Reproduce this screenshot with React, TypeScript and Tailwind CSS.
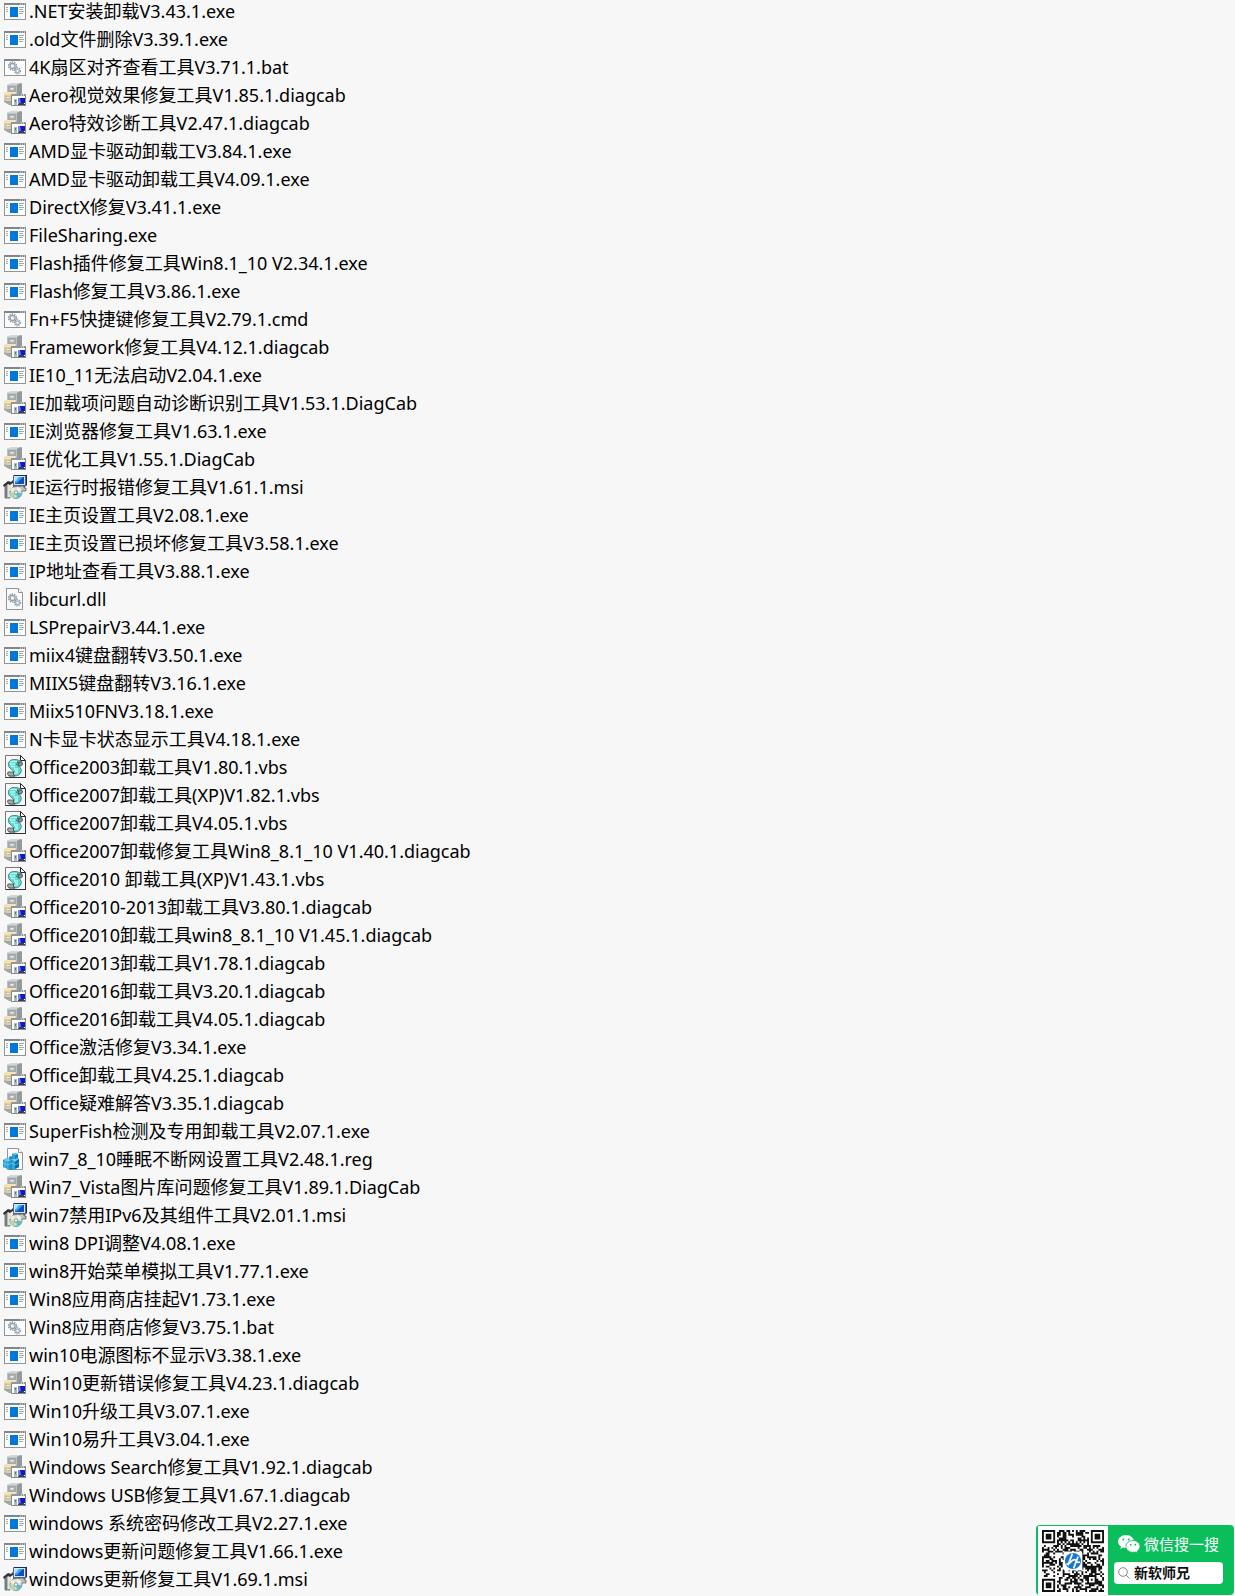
import type { ReactNode } from 'react';

type FileKind = 'exe' | 'bat' | 'cab' | 'msi' | 'dll' | 'vbs' | 'reg';

const FILES = [
  '.NET安装卸载V3.43.1.exe',
  '.old文件删除V3.39.1.exe',
  '4K扇区对齐查看工具V3.71.1.bat',
  'Aero视觉效果修复工具V1.85.1.diagcab',
  'Aero特效诊断工具V2.47.1.diagcab',
  'AMD显卡驱动卸载工V3.84.1.exe',
  'AMD显卡驱动卸载工具V4.09.1.exe',
  'DirectX修复V3.41.1.exe',
  'FileSharing.exe',
  'Flash插件修复工具Win8.1_10 V2.34.1.exe',
  'Flash修复工具V3.86.1.exe',
  'Fn+F5快捷键修复工具V2.79.1.cmd',
  'Framework修复工具V4.12.1.diagcab',
  'IE10_11无法启动V2.04.1.exe',
  'IE加载项问题自动诊断识别工具V1.53.1.DiagCab',
  'IE浏览器修复工具V1.63.1.exe',
  'IE优化工具V1.55.1.DiagCab',
  'IE运行时报错修复工具V1.61.1.msi',
  'IE主页设置工具V2.08.1.exe',
  'IE主页设置已损坏修复工具V3.58.1.exe',
  'IP地址查看工具V3.88.1.exe',
  'libcurl.dll',
  'LSPrepairV3.44.1.exe',
  'miix4键盘翻转V3.50.1.exe',
  'MIIX5键盘翻转V3.16.1.exe',
  'Miix510FNV3.18.1.exe',
  'N卡显卡状态显示工具V4.18.1.exe',
  'Office2003卸载工具V1.80.1.vbs',
  'Office2007卸载工具(XP)V1.82.1.vbs',
  'Office2007卸载工具V4.05.1.vbs',
  'Office2007卸载修复工具Win8_8.1_10 V1.40.1.diagcab',
  'Office2010 卸载工具(XP)V1.43.1.vbs',
  'Office2010-2013卸载工具V3.80.1.diagcab',
  'Office2010卸载工具win8_8.1_10 V1.45.1.diagcab',
  'Office2013卸载工具V1.78.1.diagcab',
  'Office2016卸载工具V3.20.1.diagcab',
  'Office2016卸载工具V4.05.1.diagcab',
  'Office激活修复V3.34.1.exe',
  'Office卸载工具V4.25.1.diagcab',
  'Office疑难解答V3.35.1.diagcab',
  'SuperFish检测及专用卸载工具V2.07.1.exe',
  'win7_8_10睡眠不断网设置工具V2.48.1.reg',
  'Win7_Vista图片库问题修复工具V1.89.1.DiagCab',
  'win7禁用IPv6及其组件工具V2.01.1.msi',
  'win8 DPI调整V4.08.1.exe',
  'win8开始菜单模拟工具V1.77.1.exe',
  'Win8应用商店挂起V1.73.1.exe',
  'Win8应用商店修复V3.75.1.bat',
  'win10电源图标不显示V3.38.1.exe',
  'Win10更新错误修复工具V4.23.1.diagcab',
  'Win10升级工具V3.07.1.exe',
  'Win10易升工具V3.04.1.exe',
  'Windows Search修复工具V1.92.1.diagcab',
  'Windows USB修复工具V1.67.1.diagcab',
  'windows 系统密码修改工具V2.27.1.exe',
  'windows更新问题修复工具V1.66.1.exe',
  'windows更新修复工具V1.69.1.msi',
];

const KIND_BY_EXTENSION: Record<string, FileKind> = {
  exe: 'exe',
  bat: 'bat',
  cmd: 'bat',
  diagcab: 'cab',
  msi: 'msi',
  dll: 'dll',
  vbs: 'vbs',
  reg: 'reg',
};

function kindOf(name: string): FileKind {
  const extension = name.slice(name.lastIndexOf('.') + 1).toLowerCase();
  return KIND_BY_EXTENSION[extension] ?? 'dll';
}

// Window frame shared by programs and batch files
function WindowFrame({ children }: { children: ReactNode }) {
  return (
    <>
      <rect x="1.5" y="3.5" width="21" height="16" fill="#fff" stroke="#8f9498" />
      <path d="M1 3h22v2H1z" fill="#80868b" />
      <path d="M17 3.5h1v1h-1zM19 3.5h1v1h-1zM21 3.5h1v1h-1z" fill="#e8eaec" />
      {children}
    </>
  );
}

function Gears() {
  return (
    <>
      <circle cx="9.5" cy="10" r="4" fill="none" stroke="#8d979f" strokeWidth="1.4" strokeDasharray="1.5 1" />
      <circle cx="9.5" cy="10" r="2.6" fill="#dce2e6" stroke="#929ca4" strokeWidth="1.2" />
      <circle cx="9.5" cy="10" r="1.1" fill="#fff" />
      <circle cx="14.5" cy="14.8" r="3" fill="none" stroke="#8d979f" strokeWidth="1.3" strokeDasharray="1.3 .9" />
      <circle cx="14.5" cy="14.8" r="1.9" fill="#dbe5eb" stroke="#8aa0ae" />
      <circle cx="14.5" cy="14.8" r=".8" fill="#fff" />
    </>
  );
}

const ICONS: Record<FileKind, ReactNode> = {
  exe: (
    <WindowFrame>
      <path d="M7 7h8v10H7z" fill="#0078d7" />
      <path d="M3 7.5h2M3 9.5h2M3 11.5h2M16 7.5h5M16 9.5h4M16 11.5h5M16 13.5h4" stroke="#a3a8ac" />
    </WindowFrame>
  ),
  bat: (
    <WindowFrame>
      <Gears />
    </WindowFrame>
  ),
  dll: (
    <>
      <path d="M3.500.5h12l4 4v17h-16z" fill="#fafafa" stroke="#8f9498" />
      <path d="M15.500.5v4h4" fill="#fff" stroke="#8f9498" />
      <Gears />
    </>
  ),
  cab: (
    <>
      <path d="M4 1l5-2h9l1 2v11l-5 4H4z" fill="#a9aeaf" />
      <path d="M4 1l5-2h9l-4 2z" fill="#d3d7d7" />
      <path d="M4 1h10v9H4z" fill="#bcc1c1" />
      <path d="M14 1l4-2 1 1v11h-5z" fill="#939a9b" />
      <path d="M5.500 2.500h7v5h-7z" fill="#aeb4b5" stroke="#959b9d" strokeWidth=".6" />
      <path d="M7.500 4h3v1.500h-3z" fill="#edf0ef" />
      <path d="M1 10l2-2h10v8l-3 3H5l-4-3z" fill="#e2c67e" />
      <path d="M3 8h10l-1 3H1z" fill="#f6e5b3" />
      <path d="M1 11h8v6H3l-2-2z" fill="#d8cda4" />
      <path d="M3 12.500h4v2H3z" fill="#f5f2e6" stroke="#a5a08b" strokeWidth=".5" />
      <path d="M1 16l2 1h6v4H6l-5-3z" fill="#a4a9a7" />
      <rect x="8.500" y="10.500" width="14" height="11" fill="#fff" stroke="#858b91" />
      <path d="M8 10h15v2H8z" fill="#9096a0" />
      <path d="M18 10.500h1v1h-1zM20 10.500h1v1h-1z" fill="#fff" />
      <path d="M11 15h3v6h-3z" fill="#aeb8ba" />
      <path d="M12 16h1v2h-1z" fill="#3f963a" />
      <path d="M15 14h7v5h-7z" fill="#6b85da" />
      <path d="M17 14h5v5h-4z" fill="#1018c9" />
      <path d="M16 19h5v1h1v1h-7v-1z" fill="#36405e" />
    </>
  ),
  msi: (
    <>
      <path d="M2 8l5-2v16H2z" fill="#b7b9b7" stroke="#5a5d5b" strokeWidth=".8" />
      <path d="M2 8h2v14H2z" fill="#777b7a" />
      <path d="M5 8h3v13H5z" fill="#e4e4df" />
      <path d="M0 9l5-4 3 1 2-2v3L7 9 5 8l-4 3z" fill="#323534" />
      <path d="M10 11V0h13v10l-2 2H10z" fill="#54677c" />
      <path d="M10 0l1-1h13v10l-1 1V0z" fill="#152b62" />
      <path d="M11 0h11v9H11z" fill="#d9e6ef" />
      <path d="M12 1h9v7h-9z" fill="#0a4fc4" />
      <path d="M12 1h8l-6 6h-2z" fill="#39a4ef" />
      <path d="M12 1h4l-3 4h-1z" fill="#9de4fa" />
      <path d="M16 10h5v2h2v3h-6z" fill="#bfc3c3" stroke="#4d5152" strokeWidth=".7" />
      <circle cx="13" cy="16.500" r="6" fill="#d9dcda" stroke="#747978" strokeWidth=".8" />
      <path d="M13 16.500l-6-2 1-2 3-1z" fill="#eef3c3" />
      <path d="M13 16.500l-2 6-3-2-1-3z" fill="#a8d9b8" />
      <path d="M13 16.500l6 1-2 3-3 2z" fill="#4fc3c5" />
      <path d="M13 16.500l1-6 3 1 2 3z" fill="#ecf2ee" />
      <circle cx="13" cy="16.500" r="1.700" fill="#fff" stroke="#747978" strokeWidth=".8" />
    </>
  ),
  vbs: (
    <>
      <path d="M2.500-.5h15l5 5v17h-20z" fill="#f7f7f7" stroke="#777" />
      <path d="M17.500-.5v5h5z" fill="#fff" stroke="#222" />
      <path d="M22.500 5v16.500h-20" fill="none" stroke="#333" />
      <path d="M7 5c1-2 7-2 11 0l1 3h-6c3 2 6 4 5 8-1 3-4 4-7 4H6l-1-3h6c1-2-3-3-5-6-1-2-1-5 1-6z" fill="#5edbd5" stroke="#22736f" strokeWidth=".8" />
      <path d="M7 6c2-1 5-1 7 0M7 8h5M8 10l4 1M11 13h4M12 15h3M11 17h4" stroke="#dffff9" fill="none" />
      <path d="M14 6h4c2 0 2 3 0 4h-3c1-1 1-3-1-4z" fill="#8b8e8c" stroke="#383838" strokeWidth=".7" />
      <path d="M5 16h6c-1 1-1 3 1 4H7c-2 0-3-2-2-4z" fill="#a2aca9" stroke="#303838" strokeWidth=".7" />
    </>
  ),
  reg: (
    <>
      <path d="M4.500.5h11l4 4v17h-15z" fill="#fbfbfb" stroke="#92969a" />
      <path d="M15.500.5v4h4" fill="#fff" stroke="#92969a" />
      <path d="M0 12l4-2 5 2 4-2 3 1v8l-7 3-9-3z" fill="#1583bd" />
      <path d="M0 12l4-2 5 2-4 2zM9 12l4-2 3 1-4 3z" fill="#72c9ed" />
      <path d="M0 12l5 2v7l-5-2z" fill="#259dd3" />
      <path d="M5 14l4-2v10l-4-1z" fill="#1b91ca" />
      <path d="M9 13l3 1v7l-3 1z" fill="#32a6d8" />
      <path d="M12 14l4-3v8l-4 2z" fill="#086ba4" />
      <path d="M0 15l5 2 4-2 3 2 4-2M2 13v7M5 14v7" fill="none" stroke="#8bd5f3" strokeWidth=".6" />
      <path d="M9 6l3-1 3 1v4l-3 1-3-1z" fill="#1180bb" />
      <path d="M9 6l3-1 3 1-3 1z" fill="#78cff0" />
      <path d="M9 6l3 1v4l-3-1z" fill="#2ea3d7" />
      <path d="M6 9l2-1 2 1v2l-2 1-2-1z" fill="#1c90c7" />
    </>
  ),
};

function FileIcon({ kind }: { kind: FileKind }) {
  return (
    <svg viewBox="0 0 24 24" className="h-6 w-6 shrink-0 overflow-visible" aria-hidden="true">
      {ICONS[kind]}
    </svg>
  );
}

const QR_SIZE = 33;

// Ring-and-dot value of a square marker, or null outside of it
function marker(x: number, y: number, cx: number, cy: number, radius: number) {
  const distance = Math.max(Math.abs(x - cx), Math.abs(y - cy));
  if (distance > radius + 1) return null;
  if (radius === 3) return distance === 3 || distance <= 1;
  return distance === 2 || distance === 0;
}

function isDark(x: number, y: number) {
  const far = QR_SIZE - 4;
  for (const [cx, cy] of [[3, 3], [far, 3], [3, far]]) {
    const value = marker(x, y, cx, cy, 3);
    if (value !== null) return value;
  }
  if (Math.abs(x - 26) <= 2 && Math.abs(y - 26) <= 2) return marker(x, y, 26, 26, 2) === true;
  if (x === 6 || y === 6) return (x + y) % 2 === 0;
  const hash = Math.sin(x * 12.9898 + y * 78.233) * 43758.5453;
  return hash - Math.floor(hash) > 0.48;
}

function QrCode() {
  let path = '';
  for (let y = 0; y < QR_SIZE; y++) {
    for (let x = 0; x < QR_SIZE; x++) {
      if (isDark(x, y)) path += `M${x} ${y}h1v1h-1z`;
    }
  }
  return (
    <svg viewBox="0 0 33 33" className="h-[62px] w-[62px]" role="img" aria-label="二维码">
      <path d={path} fill="#111" />
      <rect x="11.500" y="11.500" width="10" height="10" rx="1" fill="#fff" />
      <circle cx="16.500" cy="16.500" r="4.300" fill="#1678d2" />
      <path d="M16.200 12.600l-2.400 6.200M19.200 14.200l-2.400 6.200M13 18.200c2.400.2 2.200-2.400 4.300-2.400 1.600 0 .4 2.200 3 1.200" fill="none" stroke="#fff" strokeWidth=".9" />
    </svg>
  );
}

function WeChatIcon() {
  return (
    <svg viewBox="0 0 22 18" className="h-[18px] w-[22px]" aria-hidden="true">
      <path d="M8 0C3.600 0 0 2.900 0 6.500c0 2.100 1.200 3.900 3 5.100L2.300 14l2.800-1.400c1 .3 1.900.4 2.900.4 4.400 0 8-2.900 8-6.500S12.400 0 8 0z" fill="#fff" />
      <path d="M15 5.500c-3.900 0-7 2.600-7 5.900s3.100 5.900 7 5.900c.9 0 1.700-.1 2.500-.4l2.300 1.100-.6-2c1.700-1.100 2.800-2.700 2.800-4.600 0-3.300-3.100-5.900-7-5.900z" fill="#fff" stroke="#0abf5b" strokeWidth=".8" />
      <g fill="#0abf5b">
        <circle cx="5.300" cy="4.500" r="1" />
        <circle cx="10.700" cy="4.500" r="1" />
        <circle cx="12.700" cy="9.700" r=".9" />
        <circle cx="17.300" cy="9.700" r=".9" />
      </g>
    </svg>
  );
}

function SearchBadge() {
  return (
    <aside className="absolute right-px bottom-px flex h-[70px] overflow-hidden rounded-sm bg-[#0abf5b] pt-px pl-0.5">
      <div className="flex w-[70px] items-center justify-center bg-white">
        <QrCode />
      </div>
      <div className="flex w-[126px] flex-col gap-1.5 px-1.5 pt-1.5">
        <div className="flex h-6 items-center gap-1 pl-1 text-[15px] leading-5 whitespace-nowrap text-white">
          <WeChatIcon />
          <span>微信搜一搜</span>
        </div>
        <label className="flex h-[22px] w-[109px] items-center gap-1 rounded-sm bg-white pl-1">
          <svg viewBox="0 0 12 12" className="h-3 w-3 shrink-0" fill="none" stroke="#858585" aria-hidden="true">
            <circle cx="5" cy="5" r="4.300" />
            <path d="M8.200 8.200l3.300 3.300" />
          </svg>
          <input
            type="text"
            defaultValue="新软师兄"
            aria-label="微信搜一搜"
            className="w-full min-w-0 bg-transparent text-sm font-bold text-[#111] outline-none"
          />
        </label>
      </div>
    </aside>
  );
}

export default function App() {
  return (
    <main className="relative min-h-screen overflow-hidden bg-[#f7f7f7] font-['Noto_Sans','Noto_Sans_CJK_SC',sans-serif] text-black">
      <ul>
        {FILES.map((name) => (
          <li key={name} className="flex h-7 items-start gap-0.5 pl-[3px] text-lg leading-[22px] whitespace-nowrap">
            <FileIcon kind={kindOf(name)} />
            <span>{name}</span>
          </li>
        ))}
      </ul>
      <SearchBadge />
    </main>
  );
}
